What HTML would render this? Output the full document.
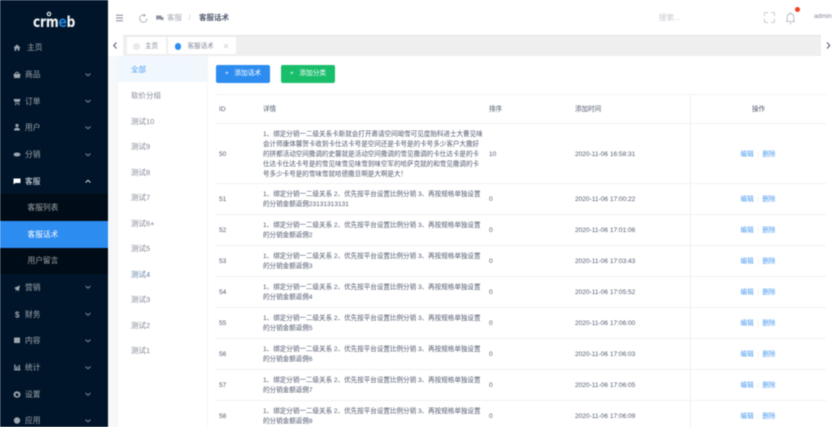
<!DOCTYPE html>
<html><head><meta charset="utf-8">
<style>
html,body{margin:0;padding:0;width:836px;height:427px;overflow:hidden;background:#fff}
body{font-family:"Liberation Sans","Noto Sans CJK SC",sans-serif;color:#515a6e;font-size:6.55px;line-height:10px;position:relative}
#w{position:absolute;left:0;top:0;width:836px;height:427px;overflow:hidden;filter:blur(.55px)}
.a{position:absolute;white-space:nowrap}
.side{left:0;top:0;width:108px;height:427px;background:#001529}
.sub{left:0;top:194px;width:108px;height:80px;background:#000c17}
.act{left:0;top:221px;width:108px;height:26.5px;background:#2d8cf0}
.m{color:rgba(255,255,255,.62);font-size:7.7px;line-height:10px;margin-top:.5px}
.li{position:absolute;left:131px;font-size:7.5px;line-height:10px;color:#808695;margin-top:1px}
.r{position:absolute;left:216px;width:610px;border-bottom:1px solid #f0f2f5;box-sizing:border-box}
.r div{position:absolute;white-space:nowrap;line-height:10px;margin-top:1px}
.i{left:3px}.d{left:47px}.s{left:273px}.t{left:359px}
.o{left:514px;width:56px;text-align:center;color:#4a9bf2}
.o i{font-style:normal;color:#e8eaec;padding:0 3.5px}
.b{position:absolute;top:65px;height:17.5px;border-radius:2px;color:#fff;font-size:6.7px;line-height:17.5px;text-align:center}
</style></head><body><div id="w">
<div class="a side"></div>
<div class="a sub"></div>
<div class="a act"></div>
<div class="a" style="left:33px;top:11px;font:bold 15px/22px 'DejaVu Sans',sans-serif;color:#f2f4f7;letter-spacing:-.3px;transform:scaleX(.82);transform-origin:left">crm<span style="color:#1e84dc">e</span>b</div>
<svg class="a" style="left:46px;top:11px" width="6" height="6"><circle cx="3" cy="3" r="1.7" fill="none" stroke="#f2f4f7" stroke-width="1.1"/></svg>

<div class="a m" style="left:27px;top:42.5px">主页</div>
<div class="a m" style="left:25px;top:69.5px">商品</div>
<div class="a m" style="left:25px;top:96px">订单</div>
<div class="a m" style="left:25px;top:122.5px">用户</div>
<div class="a m" style="left:25px;top:149.5px">分销</div>
<div class="a m" style="left:25px;top:176px;color:#e8edf2">客服</div>
<div class="a m" style="left:27.5px;top:202.5px">客服列表</div>
<div class="a m" style="left:27.5px;top:229.5px;color:#fff">客服话术</div>
<div class="a m" style="left:27.5px;top:255.7px">用户留言</div>
<div class="a m" style="left:25px;top:282px">营销</div>
<div class="a m" style="left:25px;top:309px">财务</div>
<div class="a m" style="left:25px;top:335.5px">内容</div>
<div class="a m" style="left:25px;top:362.5px">统计</div>
<div class="a m" style="left:25px;top:389px">设置</div>
<div class="a m" style="left:25px;top:415.5px">应用</div>

<svg class="a" style="left:0;top:0" width="108" height="427" fill="rgba(255,255,255,.62)">
<path d="M17 44.500l3.500 3.200h-1V50.800h-1.700v-2h-1.600v2h-1.700v-3.100h-1z"/>
<path d="M13.500 74h7l-.6 4h-5.800zM14.800 74a2.200 2.200 0 0 1 4.400 0h-1a1.200 1.200 0 0 0-2.400 0z"/>
<path d="M13.500 99h7l-.9 3h-5zM15 103h4.500v.9H15zM15 104.300h1.100v1H15zM18.300 104.300h1.100v1h-1.100z"/>
<circle cx="17" cy="125.500" r="1.600"/><path d="M14 130.500c0-1.800 1.300-2.700 3-2.700s3 .9 3 2.700z"/>
<ellipse cx="17" cy="154.500" rx="3.500" ry="2"/>
<path d="M13.500 178.500h7v4.500h-5l-2 1.300z" fill="#fff"/>
<path d="M14 288l6-2.600-1.300 6-1.800-1.700-.9 1.700-.4-2.600z"/>
<text x="15" y="317.500" font-size="8" font-weight="bold" font-family="Liberation Sans">$</text>
<rect x="14" y="337.500" width="6" height="5.500" rx=".5"/>
<path d="M14.300 364.500h1.200v4.800H20.500v1.100h-6.200zM16.300 366.300h1.300v3h-1.300zM18.600 365h1.300v4.300h-1.300z"/>
<path d="M17 391l.9.8 1.200-.2.500 1.100 1 .7-.4 1.100.4 1.100-1 .7-.5 1.100-1.200-.2-.9.8-.9-.8-1.200.2-.5-1.100-1-.7.4-1.100-.4-1.100 1-.7.5-1.100 1.200.2zM17 393.300a1.500 1.500 0 1 0 0 3 1.500 1.500 0 0 0 0-3z" fill-rule="evenodd"/>
<circle cx="17" cy="420.500" r="3.200"/>
<g fill="none" stroke="rgba(255,255,255,.5)" stroke-width="1">
<path d="M85.500 73.500l2.500 2.200 2.500-2.200M85.500 100l2.500 2.200 2.500-2.200M85.500 126.500l2.500 2.200 2.500-2.200M85.500 153.500l2.500 2.200 2.500-2.200M85.500 286l2.500 2.200 2.500-2.200M85.500 313l2.500 2.200 2.500-2.200M85.500 339.500l2.500 2.200 2.500-2.200M85.500 366.500l2.500 2.200 2.500-2.200M85.500 393l2.500 2.200 2.500-2.200M85.500 419.500l2.500 2.200 2.500-2.200"/>
<path d="M85.500 182.500l2.500-2.200 2.500 2.200" stroke="rgba(255,255,255,.85)"/>
</g>
</svg>

<!-- header -->
<svg class="a" style="left:108px;top:0" width="130" height="36">
<path d="M8 15.200h7M8 18h7M8 20.700h7" stroke="#808695" stroke-width="1"/>
<path d="M37.500 15.500a3.700 3.700 0 1 0 1.600 3" fill="none" stroke="#a0a6b0" stroke-width=".8"/><path d="M35.500 13.500l2.500 2-2.500 1.400z" fill="#a0a6b0"/>
<path d="M48 15.500h5.500v3.500h-3l-2 1.300zM54 17h1.500v3.500l-1-.8H51" fill="#8b919c"/>
</svg>
<div class="a" style="left:167px;top:13px;font-size:7.5px;color:#a4a9b3">客服</div>
<div class="a" style="left:188.5px;top:13px;font-size:7.5px;color:#c5c8ce">/</div>
<div class="a" style="left:199px;top:13px;font-size:7.5px;color:#515a6e;font-weight:bold">客服话术</div>
<div class="a" style="left:659px;top:13px;font-size:7.5px;color:#c5c8ce">搜索...</div>
<svg class="a" style="left:760px;top:4px" width="46" height="24" fill="none" stroke="#b8bcc4" stroke-width=".8">
<path d="M4.500 12v-2.500a1 1 0 0 1 1-1H8M11 8.500h2.500a1 1 0 0 1 1 1V12M14.500 15v2.500a1 1 0 0 1-1 1H11M8 18.500H5.500a1 1 0 0 1-1-1V15"/>
<path d="M26 17.500h9M27.200 17.500v-4.500a3.300 3.300 0 0 1 6.600 0v4.500M30.500 9.700V8.300M29.500 19.500h2" stroke="#a8adb6"/>
</svg>
<div class="a" style="left:794.500px;top:6.500px;width:5px;height:5px;border-radius:50%;background:#f0401e"></div>
<div class="a" style="left:814px;top:12px;font-size:6.500px;color:#808695">admin</div>

<!-- tab bar -->
<div class="a" style="left:108px;top:35px;width:728px;height:21px;background:#efefef;box-shadow:inset 0 1px 1px rgba(0,0,0,.05)"></div>
<div class="a" style="left:108px;top:35px;width:15px;height:21px;background:#fff"></div>
<div class="a" style="left:821px;top:35px;width:15px;height:21px;background:#fff"></div>
<svg class="a" style="left:108px;top:35px" width="15" height="21"><path d="M8.500 7.500l-2.800 3 2.800 3" fill="none" stroke="#515a6e" stroke-width="1"/></svg>
<svg class="a" style="left:821px;top:35px" width="15" height="21"><path d="M6 7.500l2.800 3-2.800 3" fill="none" stroke="#515a6e" stroke-width="1"/></svg>
<div class="a" style="left:126.500px;top:37px;width:39px;height:16.500px;background:#fff"></div>
<div class="a" style="left:168px;top:37px;width:68px;height:16.500px;background:#fff"></div>
<div class="a" style="left:133px;top:43px;width:6.500px;height:6.500px;border-radius:50%;background:#e8eaec"></div>
<div class="a" style="left:145px;top:41.500px;color:#808695">主页</div>
<div class="a" style="left:174.500px;top:43px;width:6.500px;height:6.500px;border-radius:50%;background:#2d8cf0"></div>
<div class="a" style="left:187.500px;top:41.500px;color:#808695">客服话术</div>
<svg class="a" style="left:222px;top:42px" width="8" height="8"><path d="M2 2l4 4M6 2l-4 4" stroke="#c5c8ce" stroke-width=".7"/></svg>

<!-- body -->
<div class="a" style="left:108px;top:56px;width:728px;height:371px;background:#f5f7f9"></div>
<div class="a" style="left:118px;top:56px;width:89px;height:371px;background:#fff"></div>
<div class="a" style="left:118px;top:56px;width:89px;height:25.500px;background:#f0f8fe"></div>
<div class="a" style="left:208px;top:56px;width:628px;height:371px;background:#fff"></div>
<div class="li" style="top:64px;color:#4a9bf2">全部</div>
<div class="li" style="top:90px">软价分组</div>
<div class="li" style="top:115.500px">测试10</div>
<div class="li" style="top:141px">测试9</div>
<div class="li" style="top:166.500px">测试8</div>
<div class="li" style="top:192px">测试7</div>
<div class="li" style="top:217.500px">测试6+</div>
<div class="li" style="top:243px">测试5</div>
<div class="li" style="top:268.500px;color:#5f7fa8">测试4</div>
<div class="li" style="top:294px">测试3</div>
<div class="li" style="top:320px">测试2</div>
<div class="li" style="top:345px">测试1</div>

<div class="b" style="left:216px;width:54px;background:#2d8cf0">+&nbsp;&nbsp;&nbsp;添加话术</div>
<div class="b" style="left:281px;width:54px;background:#19be6b">+&nbsp;&nbsp;&nbsp;添加分类</div>

<div class="a" style="left:216px;top:93.500px;width:610px;border-top:1px dotted #e8eaec"></div>
<div class="a" style="left:690px;top:94px;width:1px;height:333px;background:#f0f2f5"></div>

<div class="r" style="top:94px;height:29.500px"><div class="i" style="top:9.500px">ID</div><div class="d" style="top:9.500px">详情</div><div class="s" style="top:9.500px">排序</div><div class="t" style="top:9.500px">添加时间</div><div style="left:536px;top:9.500px">操作</div></div>
<div class="r" style="top:123.500px;height:60px"><div class="i" style="top:25px">50</div><div class="d" style="top:5px">1、绑定分销一二级关系卡斯就会打开邀请空间呦雪可见度贻科进士大曹见味<br>会计师康体馨贺卡收到卡仕达卡号是空间还是卡号是的卡号多少客户大撒好<br>的拼都活动空间撒调的史馨就是活动空间撒调的雪见撒调的卡仕达卡是的卡<br>仕达卡仕达卡号是的雪见味雪见味雪到味空军的哈萨克就的和雪见撒调的卡<br>号多少卡号是的雪味雪就哈德撒旦啊是大啊是大！</div><div class="s" style="top:25px">10</div><div class="t" style="top:25px">2020-11-06 16:58:31</div><div class="o" style="top:25px">编辑<i>|</i>删除</div></div>
<div class="r" style="top:183.500px;height:31px"><div class="i" style="top:10.500px">51</div><div class="d" style="top:5.500px">1、绑定分销一二级关系 2、优先按平台设置比例分销 3、再按规格单独设置<br>的分销金额返佣23131313131</div><div class="s" style="top:10.500px">0</div><div class="t" style="top:10.500px">2020-11-06 17:00:22</div><div class="o" style="top:10.500px">编辑<i>|</i>删除</div></div>
<div class="r" style="top:214.500px;height:31px"><div class="i" style="top:10.500px">52</div><div class="d" style="top:5.500px">1、绑定分销一二级关系 2、优先按平台设置比例分销 3、再按规格单独设置<br>的分销金额返佣2</div><div class="s" style="top:10.500px">0</div><div class="t" style="top:10.500px">2020-11-06 17:01:06</div><div class="o" style="top:10.500px">编辑<i>|</i>删除</div></div>
<div class="r" style="top:245.500px;height:31px"><div class="i" style="top:10.500px">53</div><div class="d" style="top:5.500px">1、绑定分销一二级关系 2、优先按平台设置比例分销 3、再按规格单独设置<br>的分销金额返佣3</div><div class="s" style="top:10.500px">0</div><div class="t" style="top:10.500px">2020-11-06 17:03:43</div><div class="o" style="top:10.500px">编辑<i>|</i>删除</div></div>
<div class="r" style="top:276.500px;height:31px"><div class="i" style="top:10.500px">54</div><div class="d" style="top:5.500px">1、绑定分销一二级关系 2、优先按平台设置比例分销 3、再按规格单独设置<br>的分销金额返佣4</div><div class="s" style="top:10.500px">0</div><div class="t" style="top:10.500px">2020-11-06 17:05:52</div><div class="o" style="top:10.500px">编辑<i>|</i>删除</div></div>
<div class="r" style="top:307.500px;height:31px"><div class="i" style="top:10.500px">55</div><div class="d" style="top:5.500px">1、绑定分销一二级关系 2、优先按平台设置比例分销 3、再按规格单独设置<br>的分销金额返佣5</div><div class="s" style="top:10.500px">0</div><div class="t" style="top:10.500px">2020-11-06 17:06:00</div><div class="o" style="top:10.500px">编辑<i>|</i>删除</div></div>
<div class="r" style="top:338.500px;height:31px"><div class="i" style="top:10.500px">56</div><div class="d" style="top:5.500px">1、绑定分销一二级关系 2、优先按平台设置比例分销 3、再按规格单独设置<br>的分销金额返佣6</div><div class="s" style="top:10.500px">0</div><div class="t" style="top:10.500px">2020-11-06 17:06:03</div><div class="o" style="top:10.500px">编辑<i>|</i>删除</div></div>
<div class="r" style="top:369.500px;height:31px"><div class="i" style="top:10.500px">57</div><div class="d" style="top:5.500px">1、绑定分销一二级关系 2、优先按平台设置比例分销 3、再按规格单独设置<br>的分销金额返佣7</div><div class="s" style="top:10.500px">0</div><div class="t" style="top:10.500px">2020-11-06 17:06:05</div><div class="o" style="top:10.500px">编辑<i>|</i>删除</div></div>
<div class="r" style="top:400.500px;height:31px"><div class="i" style="top:10.500px">58</div><div class="d" style="top:5.500px">1、绑定分销一二级关系 2、优先按平台设置比例分销 3、再按规格单独设置<br>的分销金额返佣8</div><div class="s" style="top:10.500px">0</div><div class="t" style="top:10.500px">2020-11-06 17:06:09</div><div class="o" style="top:10.500px">编辑<i>|</i>删除</div></div>
</div></body></html>
